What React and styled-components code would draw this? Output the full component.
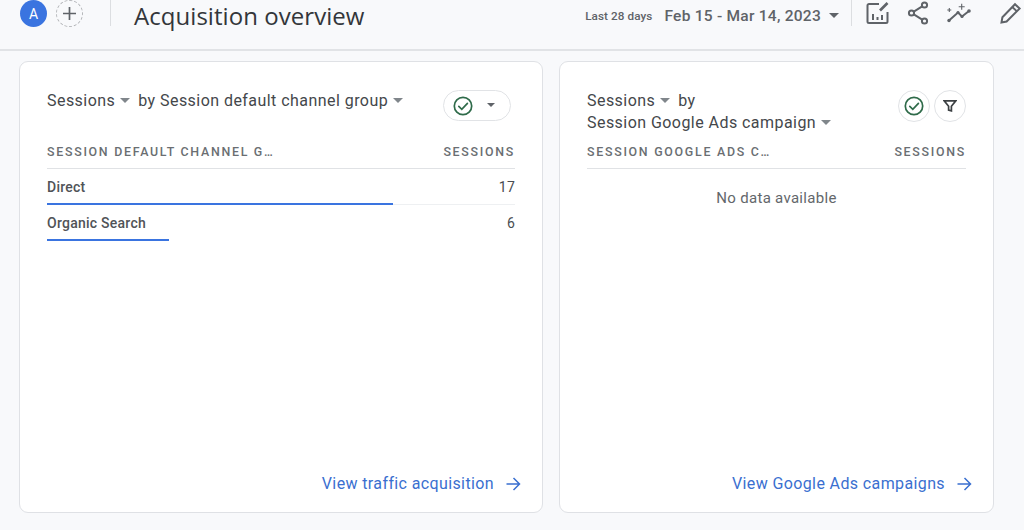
import React from "react";
import styled, { createGlobalStyle } from "styled-components";

const Global = createGlobalStyle`
  html, body { margin: 0; padding: 0; background: #f8f9fb; overflow: hidden; }
  body { font-family: Roboto, "Liberation Sans", sans-serif; color: #3c4043; }
`;
const Page = styled.div`
  width: 1024px; height: 530px; overflow: hidden; display: flex; flex-direction: column;
`;
const Header = styled.header`
  height: 51px; flex: none; box-sizing: border-box; border-bottom: 2px solid #e1e3e6;
  display: flex; align-items: flex-start; padding-left: 20px;
`;
const Avatar = styled.div`
  width: 27px; height: 27px; border-radius: 50%; background: #3a74e0; color: #fff;
  font-size: 14px; display: flex; align-items: center; justify-content: center; flex: none;
`;
const AddButton = styled.div`
  box-sizing: border-box; width: 27px; height: 27px; margin-left: 9px; border: 1px dashed #b4b6b9; border-radius: 50%;
  display: flex; align-items: center; justify-content: center; flex: none; color: #5f6368;
`;
const Divider = styled.div`
  width: 1px; height: 26px; background: #dcdee1; flex: none; margin-left: ${p => p.$ml}px;
`;
const Title = styled.h1`
  margin: 0 0 0 23px; font: 400 24px/32px "Open Sans", sans-serif; color: #33363a; letter-spacing: .05px;
  white-space: nowrap;
`;
const DateArea = styled.div`
  margin-left: auto; display: flex; align-items: center; height: 32px;
`;
const DateHint = styled.span`
  font-size: 11.7px; font-weight: 500; color: #5f6368; letter-spacing: .1px; white-space: nowrap;
`;
const DateRange = styled.span`
  margin-left: 12px; font-size: 15.5px; font-weight: 500; color: #5f6368; letter-spacing: .25px; white-space: nowrap;
`;
const Tools = styled.div`
  display: flex; align-items: flex-start; height: 32px; padding-top: 1px; width: 172px; box-sizing: border-box;
`;
const ToolIcon = styled.svg`
  display: block; flex: none; width: 26px; height: 26px; margin-left: ${p => p.$ml}px; color: #5f6368;
`;
const Main = styled.main`
  flex: 1; display: flex; gap: 16px; padding: 10px 0 0 19px; align-items: flex-start;
`;
const Card = styled.section`
  box-sizing: border-box; width: ${p => p.$w}px; height: 452px; background: #fff; border: 1px solid #dfe1e5;
  border-radius: 9px; padding: 0 27px; display: flex; flex-direction: column; flex: none;
`;
const CardHead = styled.div`
  display: flex; justify-content: space-between; align-items: flex-start; height: 82px; padding-top: 27px;
  box-sizing: border-box; flex: none;
`;
const Heading = styled.div`
  font-size: 16px; line-height: 22px; color: #44474b; letter-spacing: .45px; display: flex; flex-wrap: wrap; width: ${p => p.$w}px; margin-top: 1px;
`;
const HeadPart = styled.span`
  display: inline-flex; align-items: center; white-space: nowrap; margin-right: ${p => p.$mr || 0}px;
`;
const Caret = styled.i`
  display: inline-block; width: 0; height: 0; border-left: ${p => p.$s || 5.5}px solid transparent; border-right: ${p => p.$s || 5.5}px solid transparent;
  border-top: ${p => p.$s || 5.5}px solid ${p => p.$c || "#80868b"}; margin-left: ${p => p.$ml ?? 5}px; margin-top: -1px; flex: none;
`;
const Controls = styled.div`
  display: flex; gap: 4px; padding-top: 1px;
`;
const Pill = styled.div`
  box-sizing: border-box; width: 68px; height: 31px; border: 1px solid #e1e3e6; border-radius: 16px;
  display: flex; align-items: center; padding-left: 7.5px; margin-right: 4px;
`;
const Round = styled.div`
  box-sizing: border-box; width: 32px; height: 32px; border: 1px solid #e1e3e6; border-radius: 50%;
  display: flex; align-items: center; justify-content: center;
`;
const TableHead = styled.div`
  display: flex; justify-content: space-between; height: 25px; box-sizing: border-box;
  border-bottom: 1px solid #e0e2e5; font-size: 12.4px; line-height: 16px; font-weight: 500; letter-spacing: 1.72px; color: #6a6e72;
  flex: none; white-space: nowrap;
`;
const Row = styled.div`
  height: 36px; box-sizing: border-box; position: relative; flex: none; display: flex; justify-content: space-between;
  padding-top: 10px; font-size: 14px; line-height: 17px; border-bottom: 1px solid ${p => p.$line ? "#eef0f2" : "transparent"};
`;
const RowName = styled.span` font-weight: 500; color: #505357; letter-spacing: .25px; `;
const RowValue = styled.span` color: #4a4d51; letter-spacing: .2px; `;
const Bar = styled.div`
  position: absolute; left: 0; bottom: -1px; height: 2px; background: #3a74e0;
`;
const Empty = styled.div`
  text-align: center; font-size: 15px; color: #63676b; padding-top: 20px; letter-spacing: .3px; line-height: 18px;
`;
const Footer = styled.a`
  margin: auto -6px 17px 0; display: flex; justify-content: flex-end; align-items: center;
  color: #3a6fd0; font-size: 16px; line-height: 22px; letter-spacing: .38px; white-space: nowrap;
`;
const Arrow = styled.svg`
  width: 16px; height: 16px; margin-left: 11px; flex: none; display: block;
`;

const Check = ({ size = 22 }) => (
  <svg width={size} height={size} viewBox="0 0 22 22" fill="none" stroke="#2f6b4a" strokeWidth="1.7" style={{ display: "block" }}>
    <circle cx="11" cy="11" r="8.7" />
    <path d="M6.8 11.3l3 3 5.6-6" strokeLinecap="round" />
  </svg>
);
const ArrowRight = () => (
  <Arrow viewBox="0 0 16 16" fill="none" stroke="#3a6fd0" strokeWidth="1.5">
    <path d="M1.5 8H14M8.5 2L14.5 8L8.5 14" />
  </Arrow>
);

export default function App() {
  return (
    <Page>
      <Global />
      <Header>
        <Avatar>A</Avatar>
        <AddButton>
          <svg width="13" height="13" viewBox="0 0 13 13" stroke="currentColor" strokeWidth="1.7"><path d="M6.5 0v13M0 6.5h13" /></svg>
        </AddButton>
        <Divider $ml={27} />
        <Title>Acquisition overview</Title>
        <DateArea>
          <DateHint>Last 28 days</DateHint>
          <DateRange>Feb 15 - Mar 14, 2023</DateRange>
          <Caret $ml={8} $s={5} $c="#5f6368" />
        </DateArea>
        <Divider $ml={12} />
        <Tools>
          <ToolIcon $ml={13} viewBox="0 0 26 26" fill="none" stroke="currentColor" strokeWidth="2">
            <path d="M14 3H4a1.5 1.5 0 0 0-1.5 1.5v16A1.5 1.5 0 0 0 4 22h17a1.5 1.5 0 0 0 1.5-1.5V11" />
            <path d="M8 19v-6M12.5 19v-3M17 19v-5" />
            <path d="M15 9.5l7.5-7.5" strokeWidth="2.6" />
          </ToolIcon>
          <ToolIcon $ml={14} viewBox="0 0 26 26" fill="none" stroke="currentColor" strokeWidth="2">
            <circle cx="19.5" cy="4" r="2.6" /><circle cx="6.5" cy="12" r="2.6" /><circle cx="19.5" cy="20" r="2.6" />
            <path d="M8.8 10.6L17.2 5.4M8.8 13.4L17.2 18.6" />
          </ToolIcon>
          <ToolIcon $ml={14} viewBox="0 0 26 26" fill="none" stroke="currentColor" strokeWidth="2">
            <path d="M4 19.5l9-8 4 4 7-5.5" />
            <circle cx="4" cy="19.5" r="1.7" fill="currentColor" stroke="none" /><circle cx="13" cy="11.5" r="1.6" fill="currentColor" stroke="none" />
            <circle cx="17" cy="15.5" r="1.6" fill="currentColor" stroke="none" /><circle cx="24" cy="10" r="1.8" fill="currentColor" stroke="none" />
            <path d="M16.7 2.7v6M13.7 5.7h6M4.3 7v4M2.3 9h4" strokeWidth="1.1" />
          </ToolIcon>
          <ToolIcon $ml={26} viewBox="0 0 26 26" fill="none" stroke="currentColor" strokeWidth="2">
            <path d="M4.5 21.5l.9-5.2L18 3.2l4.6 4.4L9.6 20.5z" /><path d="M15.3 6l4.6 4.4" />
          </ToolIcon>
        </Tools>
      </Header>
      <Main>
        <Card $w={524}>
          <CardHead>
            <Heading>
              <HeadPart $mr={8}>Sessions<Caret /></HeadPart>
              <HeadPart>by Session default channel group<Caret /></HeadPart>
            </Heading>
            <Controls>
              <Pill>
                <Check />
                <Caret $ml={13} $s={4.5} $c="#5f6368" />
              </Pill>
            </Controls>
          </CardHead>
          <TableHead><span>SESSION DEFAULT CHANNEL G…</span><span>SESSIONS</span></TableHead>
          <Row $line><RowName>Direct</RowName><RowValue>17</RowValue><Bar style={{ width: "74%" }} /></Row>
          <Row><RowName>Organic Search</RowName><RowValue>6</RowValue><Bar style={{ width: "26%" }} /></Row>
          <Footer>View traffic acquisition<ArrowRight /></Footer>
        </Card>
        <Card $w={435}>
          <CardHead>
            <Heading $w={300}>
              <HeadPart $mr={8}>Sessions<Caret /></HeadPart>
              <HeadPart>by</HeadPart>
              <HeadPart>Session Google Ads campaign<Caret /></HeadPart>
            </Heading>
            <Controls>
              <Round><Check /></Round>
              <Round>
                <svg width="14" height="14" viewBox="0 0 14 14" fill="none" stroke="#3c4043" strokeWidth="1.7"><path d="M1.2 1.8h11.6L8.4 7.2v4.6L5.6 11V7.2z" /></svg>
              </Round>
            </Controls>
          </CardHead>
          <TableHead><span>SESSION GOOGLE ADS C…</span><span>SESSIONS</span></TableHead>
          <Empty>No data available</Empty>
          <Footer>View Google Ads campaigns<ArrowRight /></Footer>
        </Card>
      </Main>
    </Page>
  );
}
